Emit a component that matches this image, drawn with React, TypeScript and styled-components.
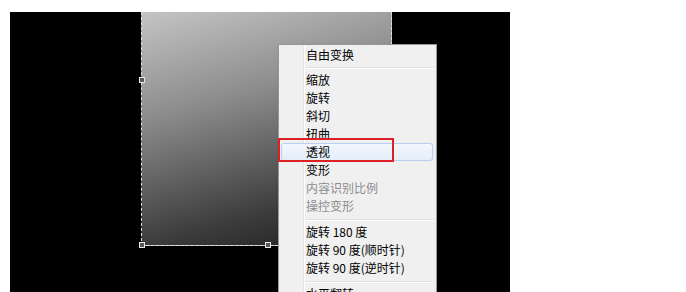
import React from "react";
import styled, { createGlobalStyle } from "styled-components";

const GlobalStyle = createGlobalStyle`
  html, body { margin: 0; padding: 0; background: #ffffff; }
  body { font-family: "Noto Sans CJK SC", "Noto Sans", sans-serif; }
`;

const Page = styled.div`
  width: 686px;
  height: 292px;
  padding: 12px 0 0 10px;
  box-sizing: border-box;
  overflow: hidden;
`;

const Stage = styled.div`
  position: relative;
  width: 500px;
  height: 280px;
  background: #000;
  overflow: hidden;
  display: flex;
  align-items: flex-start;
  padding-left: 131px;
  box-sizing: border-box;
`;

const DocRect = styled.div`
  position: relative;
  width: 251px;
  height: 234px;
  box-sizing: border-box;
  border: 1px dashed #e0e0e0;
  border-top: none;
  background: linear-gradient(165deg, #c4c4c4 0%, #8c8c8c 36%, #3c3c3c 78%, #1c1c1c 100%);
`;

const Handle = styled.div<{ $x: number; $y: number }>`
  position: absolute;
  left: ${(p) => p.$x - 3}px;
  top: ${(p) => p.$y - 3}px;
  width: 6px;
  height: 6px;
  border: 1px solid #e8e8e8;
  background: #5a5a5a;
  box-sizing: border-box;
`;

const Pivot = styled.svg`
  position: absolute;
  left: 120px;
  top: 62px;
`;

const Menu = styled.div`
  position: absolute;
  left: 268px;
  top: 32px;
  width: 159px;
  padding: 1px 2px 2px 2px;
  box-sizing: border-box;
  background: #f0f0f0;
  border: 1px solid #979797;
  box-shadow: 2px 2px 3px rgba(0, 0, 0, 0.35);
  &::before {
    content: "";
    position: absolute;
    left: 24px;
    top: 1px;
    bottom: 0;
    width: 1px;
    background: #e2e3e3;
    box-shadow: 1px 0 0 #ffffff;
  }
`;

const Item = styled.div<{ $disabled?: boolean; $hover?: boolean }>`
  position: relative;
  height: 18px;
  padding-left: 24px;
  margin-right: 1px;
  font-size: 12px;
  line-height: 16px;
  color: ${(p) => (p.$disabled ? "#8d8d8d" : "#000000")};
  box-sizing: border-box;
  border-radius: 3px;
  border: 1px solid ${(p) => (p.$hover ? "#b7d0ef" : "transparent")};
  background: ${(p) =>
    p.$hover ? "linear-gradient(#f3f7fd, #e4edf9)" : "transparent"};
  white-space: nowrap;
`;

const Separator = styled.div<{ $h: number }>`
  position: relative;
  height: ${(p) => p.$h}px;
  margin-left: 25px;
  display: flex;
  align-items: center;
  &::after {
    content: "";
    display: block;
    width: 100%;
    height: 1px;
    background: #e0e0e0;
    box-shadow: 0 1px 0 #ffffff;
  }
`;

const RedBox = styled.div`
  position: absolute;
  left: 268px;
  top: 126px;
  width: 116px;
  height: 24px;
  box-sizing: border-box;
  border: 2px solid #dd1f26;
`;

type Entry =
  | { kind: "item"; label: string; disabled?: boolean; hover?: boolean }
  | { kind: "sep"; h: number };

const entries: Entry[] = [
  { kind: "item", label: "自由变换" },
  { kind: "sep", h: 7 },
  { kind: "item", label: "缩放" },
  { kind: "item", label: "旋转" },
  { kind: "item", label: "斜切" },
  { kind: "item", label: "扭曲" },
  { kind: "item", label: "透视", hover: true },
  { kind: "item", label: "变形" },
  { kind: "item", label: "内容识别比例", disabled: true },
  { kind: "item", label: "操控变形", disabled: true },
  { kind: "sep", h: 8 },
  { kind: "item", label: "旋转 180 度" },
  { kind: "item", label: "旋转 90 度(顺时针)" },
  { kind: "item", label: "旋转 90 度(逆时针)" },
  { kind: "sep", h: 8 },
  { kind: "item", label: "水平翻转" },
];

export default function App() {
  return (
    <>
      <GlobalStyle />
      <Page>
        <Stage>
          <DocRect>
            <Handle $x={0} $y={68} />
            <Handle $x={0} $y={233} />
            <Handle $x={126} $y={233} />
            <Pivot width="13" height="13" viewBox="0 0 13 13">
              <circle cx="6.5" cy="6.5" r="2.5" fill="none" stroke="#909090" strokeWidth="1" />
              <path d="M6.5 0.5V4M6.5 9V12.5M0.5 6.5H4M9 6.5H12.5" stroke="#909090" strokeWidth="1" />
            </Pivot>
          </DocRect>
          <Menu>
            {entries.map((e, i) =>
              e.kind === "sep" ? (
                <Separator key={i} $h={e.h} />
              ) : (
                <Item key={i} $disabled={e.disabled} $hover={e.hover}>
                  {e.label}
                </Item>
              )
            )}
          </Menu>
          <RedBox />
        </Stage>
      </Page>
    </>
  );
}
